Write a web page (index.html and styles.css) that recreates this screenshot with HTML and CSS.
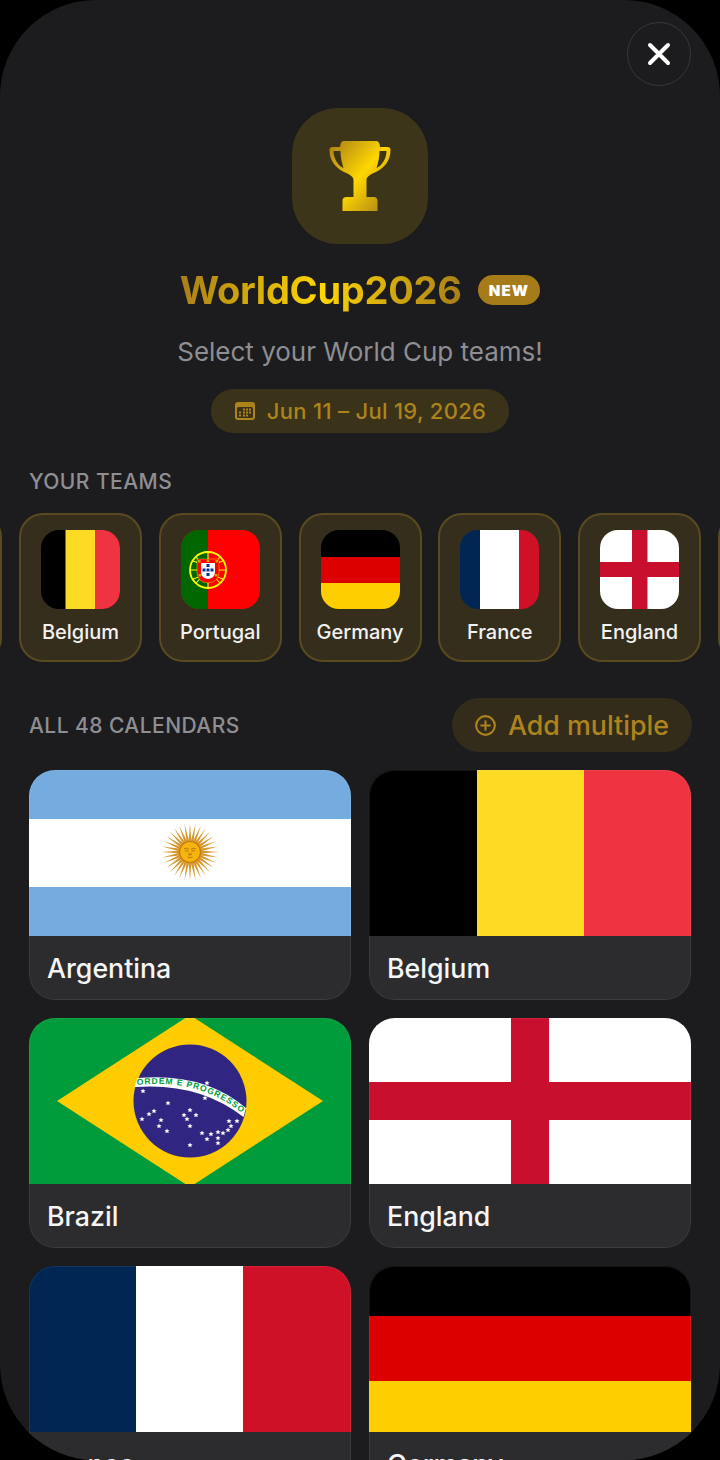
FILE: index.html
```html
<!DOCTYPE html>
<html lang="en">
<head>
<meta charset="utf-8">
<title>WorldCup2026</title>
<link rel="stylesheet" href="styles.css">
</head>
<body>
<svg class="defs" width="0" height="0" aria-hidden="true">
  <defs>
    <linearGradient id="gold" x1="0" y1="0" x2="1" y2="1">
      <stop offset="0" stop-color="#a67c1a"/>
      <stop offset=".5" stop-color="#ffd700"/>
      <stop offset="1" stop-color="#a67c1a"/>
    </linearGradient>
    <path id="ray" d="M-1.500 -9L0 -28.500L1.500 -9Z"/>
    <g id="r2"><use href="#ray"/><use href="#ray" transform="rotate(180)"/></g>
    <g id="r4"><use href="#r2"/><use href="#r2" transform="rotate(90)"/></g>
    <g id="r8"><use href="#r4"/><use href="#r4" transform="rotate(45)"/></g>
    <g id="r16"><use href="#r8"/><use href="#r8" transform="rotate(22.5)"/></g>
    <g id="r32"><use href="#r16"/><use href="#r16" transform="rotate(11.25)"/></g>
    <path id="star" d="M0 -2.600L.8 -.8L2.600 -.8L1.200 .4L1.700 2.200L0 1.200L-1.700 2.200L-1.200 .4L-2.600 -.8L-.8 -.8Z" fill="#fff"/>
  </defs>
</svg>
<main class="sheet">
  <button class="close" aria-label="Close">
    <svg width="24" height="24" viewBox="0 0 24 24"><path d="M3 3L21 21M21 3L3 21" fill="none" stroke="#fff" stroke-width="4" stroke-linecap="round"/></svg>
  </button>

  <header class="hero">
    <div class="app-icon">
      <svg width="62" height="70" viewBox="0 0 61 70">
        <path fill="url(#gold)" fill-rule="evenodd" d="M14 0H47Q50 0 50.500 6H58Q61 6 61 9C61 20 55 28 42 33C38 36 37 36 37 40V56H44Q48 56 48 60V70H13V60Q13 56 17 56H24V40C24 36 23 36 19 33C6 28 0 20 0 9Q0 6 3 6H10.500Q11 0 14 0ZM4 10C4 18 9 25 14 27C12 21 11 15 11 10ZM57 10C57 18 52 25 47 27C49 21 50 15 50 10Z"/>
      </svg>
    </div>
    <div class="title-row">
      <h1 class="title">WorldCup2026</h1>
      <span class="badge">NEW</span>
    </div>
    <p class="subtitle">Select your World Cup teams!</p>
    <div class="dates">
      <svg width="20" height="18" viewBox="0 0 20 18">
        <rect width="20" height="18" rx="3" fill="#ad841c"/>
        <rect x="2" y="5" width="16" height="11" rx="1.500" fill="#3a3319"/>
        <g fill="#ad841c">
          <rect x="8" y="6.500" width="2" height="2"/><rect x="11" y="6.500" width="2" height="2"/><rect x="14" y="6.500" width="2" height="2"/>
          <rect x="4" y="9.500" width="2" height="2"/><rect x="8" y="9.500" width="2" height="2"/><rect x="11" y="9.500" width="2" height="2"/><rect x="14" y="9.500" width="2" height="2"/>
          <rect x="4" y="12.500" width="2" height="2"/><rect x="8" y="12.500" width="2" height="2"/><rect x="11" y="12.500" width="2" height="2"/>
        </g>
      </svg>
      <span>Jun 11 – Jul 19, 2026</span>
    </div>
  </header>

  <h2 class="section-label teams-label">YOUR TEAMS</h2>
  <div class="teams">
    <div class="team"></div>
    <div class="team">
      <svg class="team-flag" viewBox="0 0 79 79"><rect width="79" height="79" fill="#000"/><rect x="24.500" width="30" height="79" fill="#fdda24"/><rect x="54.500" width="24.500" height="79" fill="#ef3340"/></svg>
      <span class="team-name">Belgium</span>
    </div>
    <div class="team">
      <svg class="team-flag" viewBox="0 0 79 79">
        <rect width="79" height="79" fill="#f00"/><rect width="27" height="79" fill="#060"/>
        <circle cx="27" cy="40" r="18" fill="none" stroke="#ff0" stroke-width="1.800"/>
        <path d="M27 22V58M9 40H45M12 31Q27 38 42 31M12 49Q27 42 42 49M15 27L39 53M39 27L15 53" fill="none" stroke="#ff0" stroke-width="1.100"/>
        <path d="M16 29H38V42Q38 52 27 53Q16 52 16 42Z" fill="#f00" stroke="#ff0" stroke-width=".4"/>
        <path d="M20 33H34V42Q34 48 27 49Q20 48 20 42Z" fill="#fff"/>
        <g fill="#039"><rect x="25.500" y="34" width="3" height="3"/><rect x="25.500" y="38.500" width="3" height="3"/><rect x="25.500" y="43" width="3" height="3"/><rect x="21.500" y="38.500" width="3" height="3"/><rect x="29.500" y="38.500" width="3" height="3"/></g>
        <g fill="#c8a800"><rect x="17" y="30" width="2.500" height="2.500"/><rect x="25.700" y="29.500" width="2.500" height="2.500"/><rect x="34.500" y="30" width="2.500" height="2.500"/><rect x="17.500" y="44" width="2.500" height="2.500"/><rect x="34" y="44" width="2.500" height="2.500"/></g>
      </svg>
      <span class="team-name">Portugal</span>
    </div>
    <div class="team">
      <svg class="team-flag" viewBox="0 0 79 79"><rect width="79" height="27" fill="#000"/><rect y="27" width="79" height="26" fill="#d00"/><rect y="53" width="79" height="26" fill="#ffce00"/></svg>
      <span class="team-name">Germany</span>
    </div>
    <div class="team">
      <svg class="team-flag" viewBox="0 0 79 79"><rect width="20" height="79" fill="#002654"/><rect x="20" width="39" height="79" fill="#fff"/><rect x="59" width="20" height="79" fill="#ce1126"/></svg>
      <span class="team-name">France</span>
    </div>
    <div class="team">
      <svg class="team-flag" viewBox="0 0 79 79"><rect width="79" height="79" fill="#fff"/><rect x="32" width="15.500" height="79" fill="#c8102e"/><rect y="32" width="79" height="15" fill="#c8102e"/></svg>
      <span class="team-name">England</span>
    </div>
    <div class="team"></div>
  </div>

  <div class="all-head">
    <h2 class="section-label">ALL 48 CALENDARS</h2>
    <button class="add">
      <svg width="21" height="21" viewBox="0 0 22 22"><circle cx="11" cy="11" r="9.800" fill="none" stroke="#ad841c" stroke-width="2.200"/><path d="M11 6.500V15.500M6.500 11H15.500" stroke="#ad841c" stroke-width="2.200" stroke-linecap="round"/></svg>
      <span>Add multiple</span>
    </button>
  </div>

  <div class="grid">
    <article class="card">
      <svg class="card-flag" viewBox="0 0 322 166">
        <rect width="322" height="166" fill="#74acdf"/><rect y="49" width="322" height="68" fill="#fff"/>
        <g transform="translate(161 82)">
          <use href="#r32" fill="#d8962a"/>
          <circle r="10.500" fill="#f6b40e" stroke="#c97a12" stroke-width="1.200"/>
          <path d="M-6 -3Q-3 -5 -1 -2.500M6 -3Q3 -5 1 -2.500M-5 -1Q-3 -2 -1.500 -.5M5 -1Q3 -2 1.500 -.5M-1 1L-1 3H1L1 1M-2.500 5Q0 6.500 2.500 5" fill="none" stroke="#a8670f" stroke-width=".8"/>
        </g>
      </svg>
      <h3 class="card-name">Argentina</h3>
    </article>
    <article class="card">
      <svg class="card-flag" viewBox="0 0 322 166"><rect width="108" height="166" fill="#000"/><rect x="108" width="107" height="166" fill="#fdda24"/><rect x="215" width="107" height="166" fill="#ef3340"/></svg>
      <h3 class="card-name">Belgium</h3>
    </article>
    <article class="card">
      <svg class="card-flag" viewBox="0 0 322 166">
        <rect width="322" height="166" fill="#009b3a"/>
        <path d="M161 -3L294 83L161 169L28 83Z" fill="#fc0"/>
        <circle cx="161" cy="83" r="56.500" fill="#302682"/>
        <path d="M108.500 60Q175 54 217 90L214.500 99Q170 64 105.500 69Z" fill="#fff"/>
        <path id="motto" d="M108 67Q172 60 215 97" fill="none"/>
        <text class="motto"><textPath href="#motto">ORDEM E PROGRESSO</textPath></text>
        <use href="#star" x="114" y="73"/><use href="#star" x="178" y="65"/><use href="#star" x="176" y="80"/>
        <use href="#star" x="139" y="85"/><use href="#star" x="125" y="93"/><use href="#star" x="120" y="96"/><use href="#star" x="113" y="101"/>
        <use href="#star" x="132" y="102"/><use href="#star" x="130" y="108"/><use href="#star" x="138" y="113"/>
        <use href="#star" x="161" y="92"/><use href="#star" x="155" y="97"/><use href="#star" x="167" y="97"/><use href="#star" x="158" y="101"/><use href="#star" x="161" y="108"/>
        <use href="#star" x="173" y="115"/><use href="#star" x="178" y="121"/><use href="#star" x="182" y="116"/><use href="#star" x="189" y="114"/>
        <use href="#star" x="189" y="120"/><use href="#star" x="189" y="125"/><use href="#star" x="194" y="115"/><use href="#star" x="199" y="112"/>
        <use href="#star" x="200" y="103"/><use href="#star" x="202" y="108"/><use href="#star" x="208" y="103"/><use href="#star" x="161" y="127"/>
      </svg>
      <h3 class="card-name">Brazil</h3>
    </article>
    <article class="card">
      <svg class="card-flag" viewBox="0 0 322 166"><rect width="322" height="166" fill="#fff"/><rect x="142" width="38" height="166" fill="#c8102e"/><rect y="64" width="322" height="38" fill="#c8102e"/></svg>
      <h3 class="card-name">England</h3>
    </article>
    <article class="card">
      <svg class="card-flag" viewBox="0 0 322 166"><rect width="107" height="166" fill="#002654"/><rect x="107" width="107" height="166" fill="#fff"/><rect x="214" width="108" height="166" fill="#ce1126"/></svg>
      <h3 class="card-name">France</h3>
    </article>
    <article class="card">
      <svg class="card-flag" viewBox="0 0 322 166"><rect width="322" height="50" fill="#000"/><rect y="50" width="322" height="65" fill="#d00"/><rect y="115" width="322" height="51" fill="#ffce00"/></svg>
      <h3 class="card-name">Germany</h3>
    </article>
  </div>
</main>
</body>
</html>
```
FILE: styles.css
```css
* { box-sizing: border-box; }
html, body { margin: 0; background: #000; }
body { font-family: Inter, "Liberation Sans", sans-serif; }
.defs { position: absolute; }
.sheet {
  position: relative;
  width: 720px;
  height: 1460px;
  overflow: hidden;
  background: #1c1c1e;
  border-radius: 96px;
}
.close {
  position: absolute;
  top: 22px;
  right: 29px;
  width: 64px;
  height: 64px;
  padding: 0;
  display: flex;
  align-items: center;
  justify-content: center;
  background: #1c1c1e;
  border: 1.500px solid #38383a;
  border-radius: 50%;
}
.hero {
  display: flex;
  flex-direction: column;
  align-items: center;
  padding-top: 108px;
}
.app-icon {
  width: 136px;
  height: 136px;
  display: flex;
  align-items: center;
  justify-content: center;
  background: #3d3519;
  border-radius: 46px;
}
.title-row {
  display: flex;
  align-items: center;
  gap: 16px;
  height: 46px;
  margin-top: 23px;
}
.title {
  margin: 0;
  font-size: 38px;
  line-height: 46px;
  font-weight: 700;
  letter-spacing: -.25px;
  color: transparent;
  background: linear-gradient(100deg, #a67c1a 0%, #ffd700 50%, #a67c1a 100%);
  -webkit-background-clip: text;
  background-clip: text;
}
.badge {
  display: flex;
  align-items: center;
  height: 30px;
  padding: 0 11px;
  border-radius: 15px;
  background: #a67c1a;
  color: #fff;
  font-size: 15px;
  font-weight: 900;
  letter-spacing: 1.200px;
}
.subtitle {
  margin: 22px 0 0;
  font-size: 26px;
  line-height: 34px;
  color: #8e8e93;
}
.dates {
  display: flex;
  align-items: center;
  gap: 12px;
  height: 44px;
  margin-top: 20px;
  padding: 0 23px 0 24px;
  border-radius: 22px;
  background: #3a3319;
  color: #ad841c;
  font-size: 22px;
  font-weight: 500;
  letter-spacing: .3px;
}
.section-label {
  margin: 0;
  font-size: 21px;
  line-height: 28px;
  font-weight: 500;
  letter-spacing: .45px;
  color: #8e8e93;
}
.teams-label { margin: 35px 0 0 29px; }
.teams {
  display: flex;
  gap: 16.750px;
  margin: 17px 0 0 -120.750px;
}
.team {
  flex: none;
  width: 123px;
  height: 149px;
  display: flex;
  flex-direction: column;
  align-items: center;
  padding-top: 15px;
  background: #352e1c;
  border: 2px solid #5a4a20;
  border-radius: 24px;
}
.team-flag {
  width: 79px;
  height: 79px;
  border-radius: 18px;
}
.team-name {
  margin-top: 10px;
  font-size: 20px;
  line-height: 26px;
  font-weight: 500;
  color: #f2f2f2;
}
.all-head {
  display: flex;
  align-items: center;
  justify-content: space-between;
  margin-top: 36px;
  padding: 0 28px 0 29px;
}
.all-head .section-label { margin-top: 2px; }
.add {
  display: flex;
  align-items: center;
  gap: 12px;
  height: 54px;
  padding: 0 23px;
  background: #342c1b;
  border: 0;
  border-radius: 27px;
  color: #ad841c;
  font-family: inherit;
  font-size: 26.800px;
  font-weight: 500;
}
.grid {
  display: grid;
  grid-template-columns: 322px 322px;
  grid-auto-rows: 230px;
  gap: 18px;
  margin: 18px 0 0 29px;
}
.card {
  position: relative;
  overflow: hidden;
  background: #2c2c2e;
  border-radius: 26px;
}
.card::after {
  content: "";
  position: absolute;
  inset: 0;
  border: 1.500px solid rgba(255, 255, 255, .08);
  border-radius: 26px;
}
.card-flag {
  display: block;
  width: 322px;
  height: 166px;
}
.card-name {
  margin: 0;
  padding-left: 18px;
  font-size: 26.750px;
  line-height: 64px;
  font-weight: 500;
  color: #f5f5f5;
}
.motto {
  font-family: "Liberation Sans", sans-serif;
  font-size: 8.500px;
  font-weight: 700;
  letter-spacing: .9px;
  fill: #009b3a;
}
```
